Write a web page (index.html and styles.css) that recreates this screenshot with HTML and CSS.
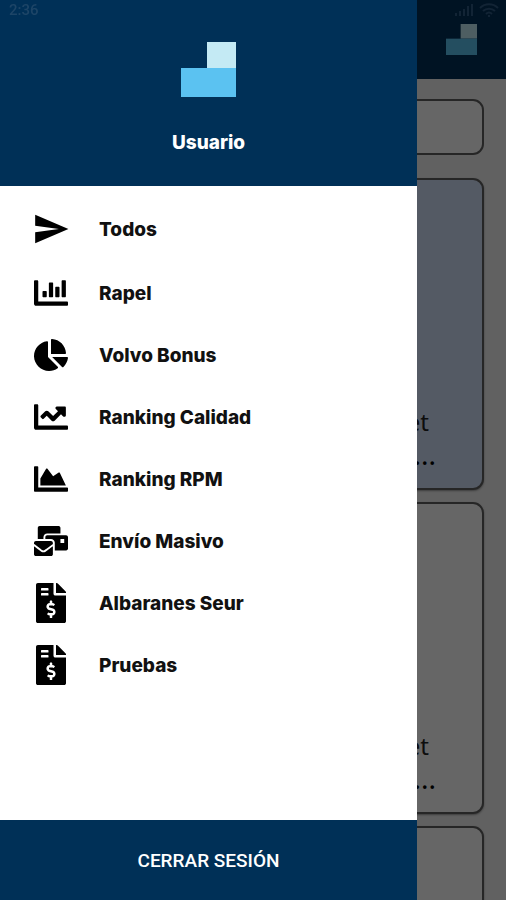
FILE: index.html
```html
<!DOCTYPE html>
<html lang="es">
<head>
<meta charset="utf-8">
<meta name="viewport" content="width=device-width, initial-scale=1">
<title>Usuario</title>
<link rel="stylesheet" href="styles.css">
</head>
<body>
<div class="page">
  <header class="appbar">
    <svg class="appbar-logo" viewBox="0 0 55 55" aria-hidden="true"><path class="logo-light" d="M26 0h29v26H26z"/><path class="logo-blue" d="M0 26h55v29H0z"/></svg>
  </header>
  <main class="feed">
    <input class="search" type="text" aria-label="Buscar">
    <article class="card card-active"><p class="card-text">et</p><p class="card-more">...</p></article>
    <article class="card"><p class="card-text">et</p><p class="card-more">...</p></article>
    <article class="card"></article>
  </main>
</div>
<div class="scrim"></div>

<aside class="drawer">
  <header class="profile">
    <svg class="profile-logo" viewBox="0 0 55 55" aria-hidden="true"><path class="logo-light" d="M26 0h29v26H26z"/><path class="logo-blue" d="M0 26h55v29H0z"/></svg>
    <h1 class="profile-name">Usuario</h1>
  </header>
  <nav class="menu">
    <a class="item item-first" href="#"><span class="icon"><svg class="icon-send" viewBox="0 0 24 24"><path d="M2.01 21L23 12 2.01 3 2 10l15 2-15 2z"/></svg></span>Todos</a>
    <a class="item" href="#"><span class="icon"><svg class="icon-wide" viewBox="0 0 512 512"><path d="M332.8 320h38.4c6.4 0 12.8-6.4 12.8-12.8V172.8c0-6.4-6.4-12.8-12.8-12.8h-38.4c-6.4 0-12.8 6.4-12.8 12.8v134.4c0 6.4 6.4 12.8 12.8 12.8zm96 0h38.4c6.4 0 12.8-6.4 12.8-12.8V76.8c0-6.4-6.4-12.8-12.8-12.8h-38.4c-6.4 0-12.8 6.4-12.8 12.8v230.4c0 6.4 6.4 12.8 12.8 12.8zm-288 0h38.4c6.4 0 12.8-6.4 12.8-12.8v-70.4c0-6.4-6.4-12.8-12.8-12.8h-38.4c-6.4 0-12.8 6.4-12.8 12.8v70.4c0 6.4 6.4 12.8 12.8 12.8zm96 0h38.4c6.4 0 12.8-6.4 12.8-12.8V108.8c0-6.4-6.4-12.8-12.8-12.8h-38.4c-6.4 0-12.8 6.4-12.8 12.8v198.4c0 6.4 6.4 12.8 12.8 12.8zM496 384H64V80c0-8.84-7.16-16-16-16H16C7.16 64 0 71.16 0 80v336c0 17.67 14.33 32 32 32h464c8.84 0 16-7.16 16-16v-32c0-8.84-7.16-16-16-16z"/></svg></span>Rapel</a>
    <a class="item" href="#"><span class="icon"><svg class="icon-wide" viewBox="0 0 544 512"><path d="M527.79 288H290.5l158.03 158.03c6.04 6.04 15.98 6.53 22.19.68 38.7-36.46 65.32-85.61 73.13-140.86 1.34-9.46-6.51-17.85-16.06-17.85zm-15.83-64.8C503.72 103.74 408.26 8.28 288.8.04 279.68-.59 272 7.1 272 16.24V240h223.77c9.14 0 16.82-7.68 16.19-16.8zM224 288V50.71c0-9.55-8.39-17.4-17.84-16.06C86.99 51.49-4.1 155.6.14 280.37 4.5 408.51 114.83 513.59 243.03 511.98c50.4-.63 96.97-16.87 135.26-44.03 7.9-5.6 8.42-17.23 1.57-24.08L224 288z"/></svg></span>Volvo Bonus</a>
    <a class="item" href="#"><span class="icon"><svg class="icon-wide" viewBox="0 0 512 512"><path d="M496 384H64V80c0-8.84-7.16-16-16-16H16C7.16 64 0 71.16 0 80v336c0 17.67 14.33 32 32 32h464c8.84 0 16-7.16 16-16v-32c0-8.84-7.16-16-16-16zM464 96H345.94c-21.38 0-32.09 25.85-16.97 40.97l32.4 32.4L288 242.75l-73.37-73.37c-12.5-12.5-32.76-12.5-45.25 0l-68.69 68.69c-6.25 6.25-6.25 16.38 0 22.63l22.62 22.62c6.25 6.25 16.38 6.25 22.63 0L192 237.25l73.37 73.37c12.5 12.5 32.76 12.5 45.25 0l96-96 32.4 32.4c15.12 15.12 40.97 4.41 40.97-16.97V112c.01-8.84-7.15-16-15.99-16z"/></svg></span>Ranking Calidad</a>
    <a class="item" href="#"><span class="icon"><svg class="icon-wide" viewBox="0 0 512 512"><path d="M500 384c6.6 0 12 5.4 12 12v40c0 6.6-5.4 12-12 12H12c-6.6 0-12-5.4-12-12V76c0-6.6 5.4-12 12-12h40c6.6 0 12 5.4 12 12v308h436zM372.7 159.5L288 216l-85.3-113.7c-5.1-6.8-15.5-6.3-19.9 1L96 248v104h384l-89.9-187.8c-3.2-6.5-11.4-8.7-17.4-4.7z"/></svg></span>Ranking RPM</a>
    <a class="item" href="#"><span class="icon"><svg class="icon-wide" viewBox="0 0 576 512"><path d="M160 448c-25.6 0-51.2-22.4-64-32-64-44.8-83.2-60.8-96-70.4V480c0 17.67 14.33 32 32 32h256c17.67 0 32-14.33 32-32V345.6c-12.8 9.6-32 25.6-96 70.4-12.8 9.6-38.4 32-64 32zm128-192H32c-17.67 0-32 14.33-32 32v16c25.6 19.2 22.4 19.2 115.2 86.4 9.6 6.4 28.8 25.6 44.8 25.6s35.2-19.2 44.8-22.4c92.8-67.2 89.6-67.2 115.2-86.4V288c0-17.67-14.33-32-32-32zm256-96H224c-17.67 0-32 14.33-32 32v32h96c33.21 0 60.59 25.42 63.71 57.82l.29-.22V416h192c17.67 0 32-14.33 32-32V192c0-17.67-14.33-32-32-32zm-32 128h-64v-64h64v64zm-352-96c0-35.29 28.71-64 64-64h224V32c0-17.67-14.33-32-32-32H96C78.33 0 64 14.33 64 32v192h96v-32z"/></svg></span>Envío Masivo</a>
    <a class="item" href="#"><span class="icon"><svg class="icon-file" viewBox="0 0 384 512"><path id="invoice" d="M377 105L279.1 7c-4.5-4.5-10.6-7-17-7H256v128h128v-6.1c0-6.3-2.5-12.4-7-16.9zm-153 31V0H24C10.7 0 0 10.7 0 24v464c0 13.3 10.7 24 24 24h336c13.3 0 24-10.7 24-24V160H248c-13.2 0-24-10.8-24-24zM64 72c0-4.42 3.58-8 8-8h80c4.42 0 8 3.58 8 8v16c0 4.42-3.58 8-8 8H72c-4.42 0-8-3.58-8-8V72zm0 80v-16c0-4.42 3.58-8 8-8h80c4.42 0 8 3.58 8 8v16c0 4.42-3.58 8-8 8H72c-4.42 0-8-3.58-8-8zm144 263.88V440c0 4.42-3.58 8-8 8h-16c-4.42 0-8-3.58-8-8v-24.29c-11.29-.58-22.27-4.52-31.37-11.35-3.9-2.93-4.1-8.77-.57-12.14l11.75-11.21c2.77-2.64 6.89-2.76 10.13-.73 3.87 2.42 8.26 3.72 12.82 3.72h28.11c6.5 0 11.8-5.92 11.8-13.19 0-5.95-3.61-11.19-8.77-12.73l-45-13.5c-18.59-5.58-31.58-23.42-31.58-43.39 0-24.52 19.05-44.44 42.67-45.07V232c0-4.42 3.58-8 8-8h16c4.42 0 8 3.58 8 8v24.29c11.29.58 22.27 4.51 31.37 11.35 3.9 2.93 4.1 8.77.57 12.14l-11.75 11.21c-2.77 2.64-6.89 2.76-10.13.73-3.87-2.43-8.26-3.72-12.82-3.72h-28.11c-6.5 0-11.8 5.92-11.8 13.19 0 5.95 3.61 11.19 8.77 12.73l45 13.5c18.59 5.58 31.58 23.42 31.58 43.39 0 24.53-19.04 44.44-42.67 45.07z"/></svg></span>Albaranes Seur</a>
    <a class="item" href="#"><span class="icon"><svg class="icon-file" viewBox="0 0 384 512"><use href="#invoice"/></svg></span>Pruebas</a>
  </nav>
  <button class="logout" type="button">CERRAR SESIÓN</button>
</aside>

<div class="status">
  <span>2:36</span>
  <span class="status-icons">
    <svg class="signal" viewBox="0 0 18 12"><path d="M0 9h2v3H0zM4 7h2v5H4zM8 5h2v7H8zM12 2h2v10h-2zM16 0h2v12h-2z"/></svg>
    <svg class="wifi" viewBox="0 0 20 14"><path d="M1 5c5-5 13-5 18 0M4 8c3-3 9-3 12 0M7 11c2-2 4-2 6 0M9 13h2"/></svg>
  </span>
</div>
</body>
</html>
```
FILE: styles.css
```css
* {
  box-sizing: border-box;
}

body {
  margin: 0;
  background: #f2f2f2;
  font-family: Inter, "Liberation Sans", sans-serif;
}

.page {
  height: 100vh;
  overflow: hidden;
}

.appbar {
  display: flex;
  justify-content: flex-end;
  height: 79px;
  padding: 24px 29px 0 0;
  background: #003057;
}

.appbar-logo {
  width: 31px;
  height: 31px;
}

.logo-light {
  fill: #c4eaf4;
}

.logo-blue {
  fill: #5bc2f1;
}

.feed {
  display: flex;
  flex-direction: column;
  gap: 12px;
  padding: 20px 22px;
}

.search {
  width: 100%;
  height: 56px;
  margin-bottom: 11px;
  padding: 0 16px;
  border: 2px solid #606060;
  border-radius: 11px;
  background: #fff;
}

.card {
  flex: none;
  display: flex;
  flex-direction: column;
  align-items: flex-end;
  justify-content: flex-end;
  height: 312px;
  padding: 0 46px 18px;
  border: 2px solid #606060;
  border-radius: 11px;
  background: #fff;
  box-shadow: 0 1px 2px #999;
}

.card-active {
  background: #d2e1fa;
}

.card-text,
.card-more {
  margin: 0;
  color: #222;
  font-family: "Noto Sans", sans-serif;
  font-size: 24px;
  line-height: 32px;
}

.card-text {
  padding-right: 7px;
}

.card-more {
  color: #000;
  font-size: 28px;
}

.scrim {
  position: fixed;
  inset: 0;
  background: rgba(0, 0, 0, 0.6);
}

.drawer {
  position: fixed;
  inset: 0 89px 0 0;
  display: flex;
  flex-direction: column;
  background: #fff;
}

.profile {
  display: flex;
  flex-direction: column;
  align-items: center;
  gap: 34px;
  height: 186px;
  padding-top: 42px;
  background: #003057;
}

.profile-logo {
  width: 55px;
  height: 55px;
}

.profile-name {
  margin: 0;
  color: #fff;
  font-size: 19px;
  font-weight: 800;
  line-height: 24px;
}

.menu {
  flex: 1;
  padding-top: 12px;
}

.item {
  display: flex;
  align-items: center;
  gap: 29px;
  height: 62px;
  padding-left: 32px;
  color: #111;
  font-size: 19px;
  font-weight: 800;
  text-decoration: none;
}

.item-first {
  margin-bottom: 2px;
}

.icon {
  display: flex;
  justify-content: center;
  width: 38px;
  fill: #000;
}

.icon-send {
  width: 38px;
  height: 38px;
}

.icon-wide {
  width: 34px;
  height: 34px;
}

.icon-file {
  width: 30px;
  height: 40px;
}

.logout {
  height: 80px;
  border: 0;
  background: #003057;
  color: #fff;
  font-family: Roboto, sans-serif;
  font-size: 19px;
  font-weight: 500;
}

.status {
  position: fixed;
  inset: 0 0 auto;
  display: flex;
  align-items: center;
  justify-content: space-between;
  height: 20px;
  padding: 0 7px 0 9px;
  color: #1d4567;
  font-family: Roboto, sans-serif;
  font-size: 15px;
  font-weight: 500;
}

.status-icons {
  display: flex;
  align-items: center;
  gap: 6px;
}

.signal {
  width: 18px;
  height: 12px;
  fill: #122435;
}

.wifi {
  width: 20px;
  height: 14px;
  fill: none;
  stroke: #122435;
  stroke-width: 2;
}
```
